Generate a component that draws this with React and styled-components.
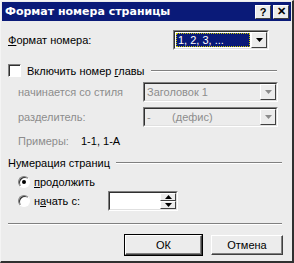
import React from "react";
import styled, { createGlobalStyle } from "styled-components";

const Global = createGlobalStyle`
  html, body { margin: 0; padding: 0; background: #ececec; }
  body { font-family: Tahoma, "Liberation Sans", Arial, sans-serif; font-size: 11px; color: #000; }
`;

const Window = styled.div`
  width: 294px;
  height: 263px;
  box-sizing: border-box;
  background: #ececec;
  border-top: 1px solid #f4f4f4;
  border-left: 1px solid #f4f4f4;
  border-right: 2px solid #303030;
  border-bottom: 2px solid #303030;
  display: flex;
  flex-direction: column;
  overflow: hidden;
`;

const TitleBar = styled.div`
  height: 19px;
  margin: 1px 1px 0 1px;
  background: #0a1a78;
  display: flex;
  align-items: center;
  padding: 0 2px 0 3px;
  color: #fff;
  font-family: "DejaVu Sans", Verdana, sans-serif;
  font-weight: bold;
  font-size: 11px;
`;

const Title = styled.div`
  flex: 1;
`;

const TitleButton = styled.div`
  width: 16px;
  height: 14px;
  margin-left: ${(p) => p.gap || 0}px;
  background: #ececec;
  color: #000;
  border-top: 1px solid #fff;
  border-left: 1px solid #fff;
  border-right: 1px solid #404040;
  border-bottom: 1px solid #404040;
  display: flex;
  align-items: center;
  justify-content: center;
  font-family: "Liberation Sans", Arial, sans-serif;
  font-size: 11px;
  font-weight: bold;
  box-sizing: border-box;
`;

const Body = styled.div`
  padding: 0 9px 0 7px;
  display: flex;
  flex-direction: column;
`;

const Row = styled.div`
  display: flex;
  align-items: center;
  height: ${(p) => p.h || 20}px;
  margin-top: ${(p) => p.mt || 0}px;
  padding-left: ${(p) => p.indent || 0}px;
`;

const Label = styled.span`
  width: ${(p) => p.w}px;
  flex: none;
  color: ${(p) => (p.disabled ? "#8c8c8c" : "#000")};
`;

const Select = styled.div`
  margin-left: auto;
  width: ${(p) => p.w}px;
  height: 20px;
  box-sizing: border-box;
  margin-right: ${(p) => p.mr || 0}px;
  border-top: 1px solid #808080;
  border-left: 1px solid #808080;
  border-right: 1px solid #fff;
  border-bottom: 1px solid #fff;
  display: flex;
`;

const SelectInner = styled.div`
  flex: 1;
  display: flex;
  border-top: 1px solid #303030;
  border-left: 1px solid #303030;
  border-right: 1px solid #e0e0e0;
  border-bottom: 1px solid #e0e0e0;
  background: ${(p) => (p.disabled ? "#ececec" : "#fff")};
`;

const SelectText = styled.div`
  flex: 1;
  display: flex;
  align-items: center;
  padding-left: ${(p) => (p.focused ? 0 : 2)}px;
  color: ${(p) => (p.disabled ? "#8c8c8c" : "#000")};
  white-space: pre;
  span {
    background: #0a1a78;
    color: #fff;
    outline: 1px dotted #c8c800;
    outline-offset: -1px;
    margin: 1px;
    padding: 0 2px;
    height: 14px;
    line-height: 14px;
    flex: 1;
  }
`;

const ArrowBtn = styled.div`
  width: 16px;
  box-sizing: border-box;
  background: #ececec;
  border-top: 1px solid #fff;
  border-left: 1px solid #fff;
  border-right: 1px solid #404040;
  border-bottom: 1px solid #404040;
  display: flex;
  align-items: center;
  justify-content: center;
`;

const Arrow = ({ color = "#000", up }) => (
  <svg width="7" height="4" viewBox="0 0 7 4">
    <path d={up ? "M3.5 0 L7 4 L0 4 Z" : "M0 0 L7 0 L3.5 4 Z"} fill={color} />
  </svg>
);

const GroupHeader = styled.div`
  display: flex;
  align-items: center;
  height: 13px;
  margin-top: ${(p) => p.mt || 0}px;
  margin-right: ${(p) => p.mr || 0}px;
  &::after {
    content: "";
    flex: 1;
    margin-left: 6px;
    border-top: 1px solid #808080;
    border-bottom: 1px solid #fff;
  }
`;

const Checkbox = styled.div`
  width: 13px;
  height: 13px;
  box-sizing: border-box;
  background: #fff;
  border-top: 1px solid #808080;
  border-left: 1px solid #808080;
  border-right: 1px solid #fff;
  border-bottom: 1px solid #fff;
  box-shadow: inset 1px 1px 0 #303030;
  margin-right: 6px;
  flex: none;
`;

const Radio = styled.div`
  width: 12px;
  height: 12px;
  box-sizing: border-box;
  border-radius: 50%;
  background: #fff;
  border: 1px solid;
  border-color: #808080 #fff #fff #808080;
  box-shadow: inset 1px 1px 0 #303030;
  margin-right: 4px;
  flex: none;
  display: flex;
  align-items: center;
  justify-content: center;
  &::after {
    content: "";
    width: 4px;
    height: 4px;
    border-radius: 50%;
    background: #000;
    display: ${(p) => (p.checked ? "block" : "none")};
  }
`;

const Spinner = styled.div`
  width: 70px;
  height: 20px;
  box-sizing: border-box;
  border-top: 1px solid #808080;
  border-left: 1px solid #808080;
  border-right: 1px solid #fff;
  border-bottom: 1px solid #fff;
  display: flex;
`;

const SpinInner = styled.div`
  flex: 1;
  display: flex;
  background: #fff;
  border-top: 1px solid #303030;
  border-left: 1px solid #303030;
  border-right: 1px solid #e0e0e0;
  border-bottom: 1px solid #e0e0e0;
  justify-content: flex-end;
`;

const SpinButtons = styled.div`
  width: 16px;
  display: flex;
  flex-direction: column;
`;

const SpinBtn = styled(ArrowBtn)`
  flex: 1;
`;

const Separator = styled.div`
  margin-top: ${(p) => p.mt || 0}px;
  margin-right: 1px;
  border-top: 1px solid #808080;
  border-bottom: 1px solid #fff;
`;

const ButtonRow = styled.div`
  display: flex;
  justify-content: flex-end;
  gap: 7px;
  margin-top: 9px;
  margin-right: -1px;
`;

const Button = styled.div`
  width: ${(p) => p.w}px;
  height: 22px;
  box-sizing: border-box;
  background: #ececec;
  border: 1px solid ${(p) => (p.primary ? "#000" : "transparent")};
  display: flex;
  div {
    flex: 1;
    display: flex;
    align-items: center;
    justify-content: center;
    border-top: 1px solid #fff;
    border-left: 1px solid #fff;
    border-right: 1px solid #404040;
    border-bottom: 1px solid #404040;
    box-shadow: inset -1px -1px 0 #808080;
  }
`;

export default function App() {
  return (
    <>
      <Global />
      <Window>
        <TitleBar>
          <Title>Формат номера страницы</Title>
          <TitleButton>?</TitleButton>
          <TitleButton gap={2}>✕</TitleButton>
        </TitleBar>
        <Body>
          <Row mt={9} h={20}>
            <Label w={100}>
              <u>Ф</u>ормат номера:
            </Label>
            <Select w={96} mr={14}>
              <SelectInner>
                <SelectText focused>
                  <span>1, 2, 3, ...</span>
                </SelectText>
                <ArrowBtn>
                  <Arrow />
                </ArrowBtn>
              </SelectInner>
            </Select>
          </Row>

          <GroupHeader mt={14} mr={6}>
            <Checkbox />
            <span>
              Включить номер <u>г</u>лавы
            </span>
          </GroupHeader>
          <Row mt={5} indent={10}>
            <Label w={120} disabled>
              начинается со стиля
            </Label>
            <Select w={135} mr={5}>
              <SelectInner disabled>
                <SelectText disabled>Заголовок 1</SelectText>
                <ArrowBtn>
                  <Arrow color="#8c8c8c" />
                </ArrowBtn>
              </SelectInner>
            </Select>
          </Row>
          <Row mt={5} indent={10}>
            <Label w={120} disabled>
              разделитель:
            </Label>
            <Select w={135} mr={5}>
              <SelectInner disabled>
                <SelectText disabled>{"-       (дефис)"}</SelectText>
                <ArrowBtn>
                  <Arrow color="#8c8c8c" />
                </ArrowBtn>
              </SelectInner>
            </Select>
          </Row>
          <Row mt={7} h={14} indent={10}>
            <Label w={63} disabled>
              Примеры:
            </Label>
            <span>1-1, 1-A</span>
          </Row>

          <GroupHeader mt={8} mr={1}>
            <span>Нумерация страниц</span>
          </GroupHeader>
          <Row mt={6} h={13} indent={10}>
            <Radio checked />
            <span>
              <u>п</u>родолжить
            </span>
          </Row>
          <Row mt={3} h={20} indent={10}>
            <Radio />
            <Label w={74}>
              н<u>а</u>чать с:
            </Label>
            <Spinner>
              <SpinInner>
                <SpinButtons>
                  <SpinBtn>
                    <Arrow up />
                  </SpinBtn>
                  <SpinBtn>
                    <Arrow />
                  </SpinBtn>
                </SpinButtons>
              </SpinInner>
            </Spinner>
          </Row>

          <Separator mt={12} />
          <ButtonRow>
            <Button w={79} primary>
              <div>ОК</div>
            </Button>
            <Button w={74}>
              <div>Отмена</div>
            </Button>
          </ButtonRow>
        </Body>
      </Window>
    </>
  );
}
